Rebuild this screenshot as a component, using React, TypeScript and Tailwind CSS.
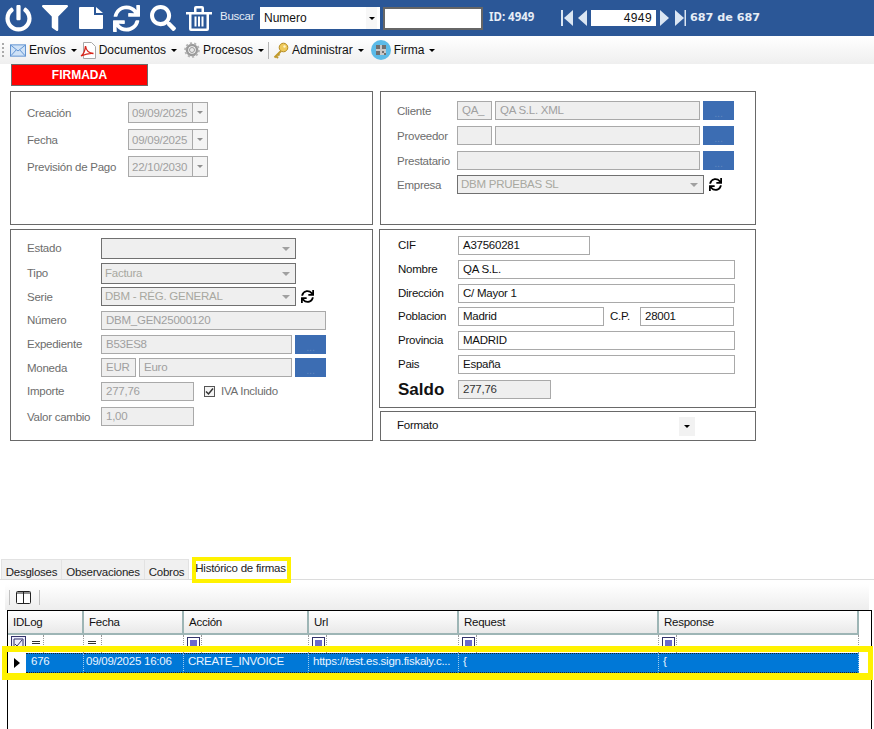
import React from "react";
import { FaPowerOff, FaFilter, FaSync, FaSearch } from "react-icons/fa";

const font = { fontFamily: '"Liberation Sans", Arial, sans-serif' };

function Caret({ className = "border-t-black" }: { className?: string }) {
  return <span className={`w-0 h-0 border-x-[3px] border-x-transparent border-t-[3px] ${className}`} />;
}

function Dis({ className, children }: { className: string; children?: React.ReactNode }) {
  return (
    <div className={`h-[19px] shrink-0 bg-[#efefef] border border-[#a9a9a9] text-[#a0a0a0] pl-[4px] leading-[17px] whitespace-nowrap overflow-hidden ${className}`}>
      {children}
    </div>
  );
}

function Txt({ className, children }: { className: string; children?: React.ReactNode }) {
  return (
    <div className={`h-[19px] shrink-0 bg-white border border-[#a9a9a9] text-[#111] pl-[4px] leading-[17px] whitespace-nowrap overflow-hidden ${className}`}>
      {children}
    </div>
  );
}

function Dots() {
  return (
    <div className="w-[31px] h-[19px] shrink-0 bg-[#3c6db3] flex items-end justify-center text-[#5f86bd] text-[11px] leading-[13px]">...</div>
  );
}

function Combo({ className, h, children }: { className: string; h: string; children?: React.ReactNode }) {
  return (
    <div className={`shrink-0 bg-[#efefef] border border-[#707070] text-[#a8a8a0] pl-[3px] pr-[5px] flex items-center justify-between ${h} ${className}`}>
      <span className="whitespace-nowrap">{children}</span>
      <span className="w-0 h-0 border-x-[4px] border-x-transparent border-t-[4px] border-t-[#a0a0a0]" />
    </div>
  );
}

function DateBox({ value }: { value: string }) {
  return (
    <div className="w-[80px] h-[21px] shrink-0 bg-[#efefef] border border-[#a9a9a9] flex text-[#a0a0a0]">
      <div className="flex-1 pl-[3px] leading-[21px] border-r border-[#a9a9a9]">{value}</div>
      <div className="w-[14px] bg-[#f4f4f4] flex items-center justify-center">
        <span className="w-0 h-0 border-x-[3px] border-x-transparent border-t-[3px] border-t-[#909090]" />
      </div>
    </div>
  );
}

const grey = "text-[#6d6d6d]";
const greyLow = "text-[#6d6d6d] leading-[15px] pt-[2px]";
const darkHigh = "text-[#111] leading-[15px] mb-[2px]";

function Row({ label, w, mt, color = grey, children }: { label: React.ReactNode; w: string; mt: string; color?: string; children?: React.ReactNode }) {
  return (
    <div className={`flex items-center ${mt}`}>
      <div className={`shrink-0 whitespace-nowrap ${w} ${color}`}>{label}</div>
      {children}
    </div>
  );
}

function SmallSync() {
  return <FaSync className="text-black text-[13px] shrink-0" />;
}

function Mail() {
  return (
    <svg width="16" height="13" viewBox="0 0 17 13" className="shrink-0">
      <rect x="0.5" y="0.5" width="16" height="12" fill="#cfe2f7" stroke="#5b8fd0" />
      <path d="M1 1l7.5 6L16 1M1 12l5.5-6M16 12l-5.5-6" fill="none" stroke="#5b8fd0" />
    </svg>
  );
}

function Pdf() {
  return (
    <svg width="16" height="17" viewBox="0 0 16 17" className="shrink-0">
      <path d="M3.5.5h8l4 4v12h-12z" fill="#fff" stroke="#a8a8a8" />
      <path d="M1 14c3-2 4-5 4.500-10 .5 4 3 7 8 7.500-4-.5-8 .5-12.500 2.500z" fill="none" stroke="#d8261c" strokeWidth="1.300" />
    </svg>
  );
}

function Gear() {
  return (
    <svg width="16" height="16" viewBox="0 0 19 19" className="shrink-0">
      <circle cx="9.500" cy="9.500" r="6" fill="none" stroke="#9a9a9a" strokeWidth="3" />
      <circle cx="9.500" cy="9.500" r="8" fill="none" stroke="#b5b5b5" strokeWidth="2.500" strokeDasharray="2.500 2.500" />
      <circle cx="9.500" cy="9.500" r="3" fill="#e8e8e8" stroke="#8a8a8a" />
    </svg>
  );
}

function Key() {
  return (
    <svg width="16" height="17" viewBox="0 0 16 17" className="shrink-0">
      <path d="M8 9L1.500 15.500M3 14l2 2M5 12l1.500 1.500" fill="none" stroke="#c09a2c" strokeWidth="2" />
      <circle cx="10.500" cy="5.500" r="4.300" fill="#eec95a" stroke="#b58b22" />
      <circle cx="11.500" cy="4.500" r="1.200" fill="#fff3c4" />
    </svg>
  );
}

function Qr() {
  return (
    <svg width="20" height="20" viewBox="0 0 20 20" className="shrink-0">
      <circle cx="10" cy="10" r="10" fill="#5cbbe8" />
      <rect x="5" y="5" width="10" height="10" fill="#c8c8c8" />
      <path d="M5 5h4v4H5zM11 5h4v4h-4zM5 11h4v4H5zM11 11h2v2h-2zM13 13h2v2h-2z" fill="#707070" />
    </svg>
  );
}

function TbItem({ icon, label, className }: { icon: React.ReactNode; label: string; className: string }) {
  return (
    <div className={`flex items-center text-[#111] text-[12px] tracking-normal ${className}`}>
      {icon}
      <span className="ml-[3px]">{label}</span>
      <Caret className="border-t-black ml-[5px]" />
    </div>
  );
}

function NavArrow({ d, w }: { d: string; w: number }) {
  return (
    <svg width={w} height="16" viewBox={`0 0 ${w} 16`} className="shrink-0">
      <path d={d} fill="#dbe6f3" />
    </svg>
  );
}

const columns = [
  { name: "IDLog", w: "w-[76px]", val: "676", pad: "pl-[5px]" },
  { name: "Fecha", w: "w-[100px]", val: "09/09/2025 16:06", pad: "pl-[2px]" },
  { name: "Acción", w: "w-[125px]", val: "CREATE_INVOICE", pad: "pl-[4px]" },
  { name: "Url", w: "w-[150px]", val: "https://test.es.sign.fiskaly.c...", pad: "pl-[4px]" },
  { name: "Request", w: "w-[200px]", val: "{", pad: "pl-[4px]" },
  { name: "Response", w: "w-[200px]", val: "{", pad: "pl-[4px]" },
];

function FilterSquare() {
  return (
    <div className="w-[13px] h-[13px] border border-[#33336b] bg-white flex items-center justify-center">
      <div className="w-[7px] h-[7px] bg-[#6a6acd]" />
    </div>
  );
}

function Equal() {
  return <div className="w-[8px] h-[3px] border-y border-[#333] mt-[6px] shrink-0" />;
}

export default function App() {
  return (
    <div className="relative w-[874px] h-[729px] overflow-hidden bg-white text-[11.500px] tracking-[-0.25px] flex flex-col" style={font}>
      {/* Top bar */}
      <div className="h-[36px] bg-[#2b5797] flex items-center shrink-0 text-white">
        <FaPowerOff className="text-[27px] ml-[5px] shrink-0" />
        <FaFilter className="text-[26px] ml-[10px] shrink-0" />
        <svg width="24" height="22" viewBox="0 0 24 22" className="ml-[11px] shrink-0">
          <path d="M1 0h14v8h9v13a1 1 0 0 1-1 1H1a1 1 0 0 1-1-1V1a1 1 0 0 1 1-1zM17 0l7 6h-7z" fill="#fff" />
        </svg>
        <FaSync className="text-[27px] ml-[10px] shrink-0" />
        <FaSearch className="text-[26px] ml-[10px] shrink-0" />
        <svg width="26" height="25" viewBox="0 0 26 25" className="ml-[10px] shrink-0">
          <path d="M0 6h26v2.500H23V23a2 2 0 0 1-2 2H5a2 2 0 0 1-2-2V8.500H0zM5.500 8.500V22.500h15V8.500z" fill="#fff" />
          <path d="M8 6V2a2 2 0 0 1 2-2h6a2 2 0 0 1 2 2v4h-2.500V2.500h-5V6z" fill="#fff" />
          <path d="M8.500 10.500h2v10h-2zM12 10.500h2v10h-2zM15.500 10.500h2v10h-2z" fill="#fff" />
        </svg>
        <span className="ml-[8px] text-[#e6edf6] mb-[2px] w-[40px] shrink-0">Buscar</span>
        <div className="w-[120px] h-[22px] bg-white text-[#111] text-[12px] tracking-normal flex items-center justify-between pl-[4px] pr-[3px] shrink-0">
          <span>Numero</span>
          <span className="w-[11px] h-[22px] bg-[#f7f7f7] flex items-center justify-center">
            <Caret />
          </span>
        </div>
        <div className="w-[100px] h-[23px] bg-white border-2 border-[#666] ml-[3px] shrink-0" />
        <span className="ml-[6px] w-[72px] shrink-0 text-[#e6edf6] font-bold text-[11.500px] tracking-normal mb-[2px]" style={{ fontFamily: '"Noto Sans", sans-serif' }}>ID: 4949</span>
        <NavArrow w={12} d="M0 0h2v16H0zM3 8l9-8v16z" />
        <div className="ml-[5px] shrink-0 flex"><NavArrow w={9} d="M9 0v16L0 8z" /></div>
        <div className="w-[65px] h-[16px] bg-white text-[#111] text-right pr-[4px] leading-[16px] text-[12px] tracking-[0.4px] ml-[4px] shrink-0">4949</div>
        <div className="ml-[4px] shrink-0 flex"><NavArrow w={9} d="M0 0l9 8-9 8z" /></div>
        <div className="ml-[6px] shrink-0 flex"><NavArrow w={11} d="M0 0l9 8-9 8zM9.500 0h1.500v16H9.500z" /></div>
        <span className="ml-[4px] font-bold text-[11.200px] tracking-normal text-[#e6edf6] whitespace-nowrap" style={{ fontFamily: '"DejaVu Sans", sans-serif' }}>687 de 687</span>
      </div>

      {/* Toolbar */}
      <div className="h-[28px] bg-gradient-to-b from-white to-[#efefef] flex items-center shrink-0 relative">
        <div className="w-[2px] h-[14px] ml-[2px] border-l-2 border-dotted border-[#aaa]" />
        <TbItem icon={<Mail />} label="Envíos" className="ml-[6px]" />
        <TbItem icon={<Pdf />} label="Documentos" className="ml-[3px]" />
        <TbItem icon={<Gear />} label="Procesos" className="ml-[7px]" />
        <div className="w-px h-[17px] bg-[#b5b5b5] ml-[4px]" />
        <TbItem icon={<Key />} label="Administrar" className="ml-[4px]" />
        <TbItem icon={<Qr />} label="Firma" className="ml-[7px]" />
      </div>

      {/* Status */}
      <div className="ml-[11px] w-[137px] h-[22px] bg-[#ff0000] border border-[#6b6b6b] text-white font-bold text-[12px] tracking-normal flex items-center justify-center shrink-0">FIRMADA</div>

      {/* Form panels */}
      <div className="flex mt-[5px] shrink-0 ml-[10px]">
        <div className="w-[363px] shrink-0">
          <div className="h-[134px] border border-[#696969] pl-[16px] pt-[10px]">
            <Row label="Creación" w="w-[101px]" mt="mt-0" color={greyLow}><DateBox value="09/09/2025" /></Row>
            <Row label="Fecha" w="w-[101px]" mt="mt-[6px]" color={greyLow}><DateBox value="09/09/2025" /></Row>
            <Row label="Previsión de Pago" w="w-[101px]" mt="mt-[6px]" color={greyLow}><DateBox value="22/10/2030" /></Row>
          </div>
          <div className="h-[212px] mt-[4px] border border-[#696969] pl-[16px] pt-[8px]">
            <Row label="Estado" w="w-[74px]" mt="mt-0"><Combo className="w-[195px]" h="h-[21px]" /></Row>
            <Row label="Tipo" w="w-[74px]" mt="mt-[4px]"><Combo className="w-[195px]" h="h-[21px]">Factura</Combo></Row>
            <Row label="Serie" w="w-[74px]" mt="mt-[3px]" color={greyLow}>
              <Combo className="w-[195px]" h="h-[19px]">DBM - RÉG. GENERAL</Combo>
              <div className="ml-[5px] flex"><SmallSync /></div>
            </Row>
            <Row label="Número" w="w-[74px]" mt="mt-[5px]"><Dis className="w-[225px]">DBM_GEN25000120</Dis></Row>
            <Row label="Expediente" w="w-[74px]" mt="mt-[5px]">
              <Dis className="w-[191px]">B53ES8</Dis>
              <div className="ml-[3px]"><Dots /></div>
            </Row>
            <Row label="Moneda" w="w-[74px]" mt="mt-[4px]" color={greyLow}>
              <Dis className="w-[35px]">EUR</Dis>
              <Dis className="w-[153px] ml-[3px]">Euro</Dis>
              <div className="ml-[3px]"><Dots /></div>
            </Row>
            <Row label="Importe" w="w-[74px]" mt="mt-[5px]">
              <Dis className="w-[93px]">277,76</Dis>
              <div className="w-[11px] h-[11px] ml-[10px] border border-[#555] bg-[#f4f4f4] flex items-center justify-center shrink-0">
                <svg width="9" height="9" viewBox="0 0 9 9"><path d="M1 4.500l2.500 2.500L8 1.500" fill="none" stroke="#333" strokeWidth="1.500" /></svg>
              </div>
              <span className="ml-[6px] text-[#6d6d6d]">IVA Incluido</span>
            </Row>
            <Row label="Valor cambio" w="w-[74px]" mt="mt-[6px]" color={greyLow}><Dis className="w-[93px]">1,00</Dis></Row>
          </div>
        </div>

        <div className="w-[377px] ml-[6px] shrink-0">
          <div className="h-[134px] ml-[1px] border border-[#696969] pl-[16px] pt-[9px]">
            <Row label="Cliente" w="w-[60px]" mt="mt-0" color={greyLow}>
              <Dis className="w-[35px]">QA_</Dis>
              <Dis className="w-[205px] ml-[3px]">QA S.L. XML</Dis>
              <div className="ml-[3px]"><Dots /></div>
            </Row>
            <Row label="Proveedor" w="w-[60px]" mt="mt-[6px]" color={greyLow}>
              <Dis className="w-[35px]" />
              <Dis className="w-[205px] ml-[3px]" />
              <div className="ml-[3px]"><Dots /></div>
            </Row>
            <Row label="Prestatario" w="w-[60px]" mt="mt-[6px]" color={greyLow}>
              <Dis className="w-[243px]" />
              <div className="ml-[3px]"><Dots /></div>
            </Row>
            <Row label="Empresa" w="w-[60px]" mt="mt-[5px]" color={greyLow}>
              <Combo className="w-[247px]" h="h-[19px]">DBM PRUEBAS SL</Combo>
              <div className="ml-[5px] flex"><SmallSync /></div>
            </Row>
          </div>
          <div className="h-[179px] mt-[4px] border border-[#696969] pl-[18px] pt-[6px]">
            <Row label="CIF" w="w-[60px]" mt="mt-0" color="text-[#111]"><Txt className="w-[132px]">A37560281</Txt></Row>
            <Row label="Nombre" w="w-[60px]" mt="mt-[5px]" color="text-[#111]"><Txt className="w-[277px]">QA S.L.</Txt></Row>
            <Row label="Dirección" w="w-[60px]" mt="mt-[5px]" color="text-[#111]"><Txt className="w-[277px]">C/ Mayor 1</Txt></Row>
            <Row label="Poblacion" w="w-[60px]" mt="mt-[4px]" color="text-[#111]">
              <Txt className="w-[146px]">Madrid</Txt>
              <span className="ml-[6px] w-[30px] shrink-0 text-[#111]">C.P.</span>
              <Txt className="w-[94px]">28001</Txt>
            </Row>
            <Row label="Provincia" w="w-[60px]" mt="mt-[5px]" color="text-[#111]"><Txt className="w-[277px]">MADRID</Txt></Row>
            <Row label="Pais" w="w-[60px]" mt="mt-[5px]" color="text-[#111]"><Txt className="w-[277px]">España</Txt></Row>
            <Row label={<span className="block font-bold text-[17px] leading-[19px] tracking-normal">Saldo</span>} w="w-[60px]" mt="mt-[6px]" color="text-[#111]">
              <div className="w-[93px] h-[19px] bg-[#efefef] border border-[#a9a9a9] text-[#333] pl-[4px] leading-[17px]">277,76</div>
            </Row>
          </div>
          <div className="h-[30px] mt-[3px] ml-[1px] border border-[#696969] pl-[16px] flex items-center">
            <span className="w-[282px] shrink-0 text-[#111]">Formato</span>
            <span className="w-[16px] h-[19px] bg-[#f2f2f2] flex items-center justify-center"><Caret /></span>
          </div>
        </div>
      </div>

      <div className="flex-1" />

      {/* Tabs */}
      <div className="h-[170px] shrink-0 flex flex-col">
        <div className="h-[21px] flex items-end border-b border-[#dcdcdc] pl-[1px] shrink-0">
          <div className="w-[61px] h-[20px] pt-[2px] bg-[#f0f0f0] border border-b-0 border-[#e2e2e2] text-center leading-[20px] text-[#222]">Desgloses</div>
          <div className="w-[83px] h-[20px] pt-[2px] bg-[#f0f0f0] border border-b-0 border-l-0 border-[#e2e2e2] text-center leading-[20px] text-[#222]">Observaciones</div>
          <div className="w-[44px] h-[20px] pt-[2px] bg-[#f0f0f0] border border-b-0 border-l-0 border-[#e2e2e2] text-center leading-[20px] text-[#222]">Cobros</div>
          <div className="w-[103px] h-[21px] bg-white text-center leading-[20px] text-[#222]">Histórico de firmas</div>
        </div>
        <div className="h-[26px] mt-[4px] mx-[5px] bg-gradient-to-b from-white to-[#ededed] flex items-center shrink-0">
          <div className="w-px h-[15px] bg-[#c0c0c0] ml-[4px]" />
          <svg width="15" height="13" viewBox="0 0 15 13" className="ml-[6px]">
            <rect x="0.500" y="0.500" width="14" height="12" fill="#fff" stroke="#222" rx="1" />
            <path d="M7.500 1v11M1 2h13" stroke="#222" />
          </svg>
          <div className="w-px h-[15px] bg-[#c0c0c0] ml-[8px]" />
        </div>
        <div className="ml-[7px] mr-[2px] flex-1 border-x border-t border-black bg-white">
          <div className="flex h-[24px]">
            {columns.map((c) => (
              <div key={c.name} className={`${c.w} shrink-0 h-[24px] bg-gradient-to-b from-white to-[#e9e9e9] border-r-2 border-b-2 border-[#9db5b5] pl-[5px] leading-[23px] text-[#111]`}>{c.name}</div>
            ))}
          </div>
          <div className="flex h-[18px] overflow-hidden">
            <div className="w-[76px] shrink-0 flex border-r border-dotted border-[#999] pl-[3px]">
              <div className="w-[15px] h-[15px] mt-[1px] border border-[#33336b] bg-[#eef] flex items-center justify-center shrink-0">
                <svg width="11" height="11" viewBox="0 0 11 11"><path d="M1 1h9v9H1zM2 6l2 2 5-6" fill="none" stroke="#33336b" /></svg>
              </div>
              <div className="ml-[6px]"><Equal /></div>
              <div className="ml-[3px] w-px h-full border-r border-dotted border-[#999] shrink-0" />
            </div>
            <div className="w-[100px] shrink-0 flex border-r border-dotted border-[#999] pl-[4px]">
              <Equal />
              <div className="w-[6px] h-full border-r border-dotted border-[#999]" />
            </div>
            {[ "w-[125px]", "w-[150px]", "w-[200px]", "w-[200px]" ].map((w, i) => (
              <div key={i} className={`${w} shrink-0 flex border-r border-dotted border-[#999] pl-[3px]`}>
                <div className="mt-[2px]"><FilterSquare /></div>
                <div className="w-[2px] h-full border-r border-dotted border-[#999]" />
              </div>
            ))}
          </div>
          <div className="flex h-[20px]">
            {columns.map((c, i) => (
              <div key={c.name} className={`${c.w} shrink-0 h-[20px] flex overflow-hidden`}>
                {i === 0 && (
                  <div className="w-[18px] h-[20px] bg-white flex items-center justify-center shrink-0">
                    <span className="w-0 h-0 border-y-[5px] border-y-transparent border-l-[6px] border-l-black" />
                  </div>
                )}
                <div className={`flex-1 min-w-0 h-[20px] bg-[#0078d7] border-y border-dotted border-[#222] text-[#eaf4ff] leading-[15px] whitespace-nowrap overflow-hidden border-r border-r-[#9cc9ee] ${c.pad}`}>{c.val}</div>
              </div>
            ))}
          </div>
        </div>
      </div>

      {/* Yellow highlights */}
      <div className="absolute left-[192px] top-[557px] w-[99px] h-[26px] border-4 border-[#fff200]" />
      <div className="absolute left-[2px] top-[646px] w-[871px] h-[34px] border-[5px] border-t-[6px] border-b-[7px] border-[#fff200]" />
    </div>
  );
}
